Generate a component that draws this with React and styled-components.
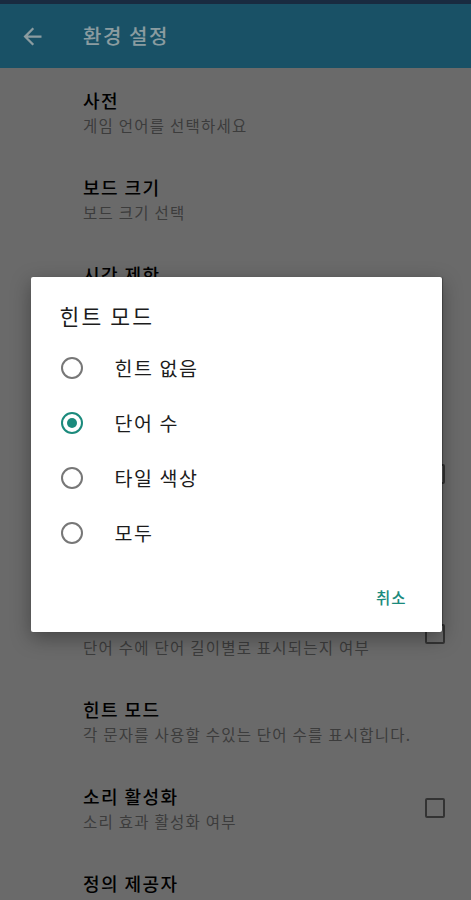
import React, { useState } from "react";
import styled, { createGlobalStyle } from "styled-components";

const GlobalStyle = createGlobalStyle`
  html, body {
    margin: 0;
    padding: 0;
    background: #999;
  }
  body {
    font-family: "Noto Sans CJK KR", "Noto Sans", Roboto, sans-serif;
    -webkit-font-smoothing: antialiased;
  }
  * {
    box-sizing: border-box;
  }
`;

const Screen = styled.div`
  position: relative;
  width: 471px;
  height: 900px;
  overflow: hidden;
  background: #999999;
`;

const StatusBar = styled.div`
  height: 4px;
  background: #243e5c;
`;

const Toolbar = styled.div`
  height: 64px;
  display: flex;
  align-items: center;
  background: #257593;
  color: #c8e0e6;
`;

const BackButton = styled.div`
  width: 27px;
  height: 27px;
  margin-left: 19px;
  margin-right: 37px;
  display: flex;
  align-items: center;
  justify-content: center;
`;

const ToolbarTitle = styled.div`
  font-size: 20px;
  font-weight: 500;
  line-height: 28px;
  letter-spacing: 0.08em;
`;

const List = styled.div`
  display: flex;
  flex-direction: column;
`;

const Item = styled.div`
  height: 87px;
  display: flex;
  align-items: center;
  padding: 20px 26px 19px 83px;
`;

const ItemText = styled.div`
  flex: 1;
  display: flex;
  flex-direction: column;
`;

const ItemTitle = styled.div`
  font-size: 18px;
  font-weight: 500;
  line-height: 24px;
  letter-spacing: 0.08em;
  color: #000;
`;

const ItemSummary = styled.div`
  margin-top: 2px;
  font-size: 15.5px;
  line-height: 22px;
  letter-spacing: 0.08em;
  color: #565656;
  white-space: nowrap;
`;

const CheckBox = styled.div`
  width: 20px;
  height: 20px;
  border: 2px solid #4a4a4a;
  border-radius: 2px;
  flex-shrink: 0;
  align-self: ${(p) => (p.$low ? "flex-end" : "center")};
`;

const Overlay = styled.div`
  position: absolute;
  inset: 0;
  padding-top: 9px;
  background: rgba(0, 0, 0, 0.3);
  display: flex;
  align-items: center;
  justify-content: center;
`;

const Dialog = styled.div`
  width: 411px;
  margin-left: 1px;
  background: #fff;
  border-radius: 2px;
  padding: 24px 0 17px;
  box-shadow: 0 6px 20px rgba(0, 0, 0, 0.35), 1px 0 1px rgba(0, 0, 0, 0.3);
  display: flex;
  flex-direction: column;
`;

const DialogTitle = styled.div`
  padding: 0 29px;
  font-size: 21.5px;
  line-height: 30px;
  letter-spacing: 0.1em;
  color: #1c1c1c;
  margin-bottom: 9.5px;
`;

const Option = styled.div`
  height: 55px;
  display: flex;
  align-items: center;
  padding-left: 30px;
  cursor: pointer;
`;

const Radio = styled.div`
  width: 22px;
  height: 22px;
  border-radius: 50%;
  border: 2px solid ${(p) => (p.$checked ? "#1b8a7c" : "#777")};
  display: flex;
  align-items: center;
  justify-content: center;
  margin-right: 32px;

  &::after {
    content: "";
    width: 10px;
    height: 10px;
    border-radius: 50%;
    background: ${(p) => (p.$checked ? "#1b8a7c" : "transparent")};
  }
`;

const OptionLabel = styled.div`
  font-size: 19.5px;
  line-height: 26px;
  letter-spacing: 0.08em;
  color: #1c1c1c;
`;

const Actions = styled.div`
  margin-top: 18.5px;
  display: flex;
  justify-content: flex-end;
  padding-right: 27px;
`;

const TextButton = styled.div`
  height: 36px;
  padding: 0 8px;
  display: flex;
  align-items: center;
  font-size: 15.5px;
  font-weight: 500;
  letter-spacing: 0.06em;
  color: #1b8a7c;
`;

const settings = [
  { title: "사전", summary: "게임 언어를 선택하세요" },
  { title: "보드 크기", summary: "보드 크기 선택" },
  { title: "시간 제한", summary: "게임 시간 제한 선택" },
  { title: "최소 단어 길이", summary: "찾을 단어의 최소 길이" },
  { title: "단어 표시", summary: "찾은 단어 목록 표시 여부", check: "low" },
  { title: "점수 방식", summary: "점수 계산 방식 선택" },
  { title: "길이별 단어 수", summary: "단어 수에 단어 길이별로 표시되는지 여부", check: "mid" },
  { title: "힌트 모드", summary: "각 문자를 사용할 수있는 단어 수를 표시합니다." },
  { title: "소리 활성화", summary: "소리 효과 활성화 여부", check: "mid" },
  { title: "정의 제공자", summary: "단어 정의를 가져올 사전" },
];

const hintModes = ["힌트 없음", "단어 수", "타일 색상", "모두"];

const BackArrow = () => (
  <svg width="27" height="27" viewBox="0 0 24 24" fill="currentColor">
    <path d="M20 11H7.83l5.59-5.59L12 4l-8 8 8 8 1.41-1.41L7.83 13H20v-2z" />
  </svg>
);

const App = () => {
  const [mode, setMode] = useState(1);

  return (
    <Screen>
      <GlobalStyle />
      <StatusBar />
      <Toolbar>
        <BackButton>
          <BackArrow />
        </BackButton>
        <ToolbarTitle>환경 설정</ToolbarTitle>
      </Toolbar>
      <List>
        {settings.map((item, i) => (
          <Item key={i}>
            <ItemText>
              <ItemTitle>{item.title}</ItemTitle>
              <ItemSummary>{item.summary}</ItemSummary>
            </ItemText>
            {item.check && <CheckBox $low={item.check === "low"} />}
          </Item>
        ))}
      </List>
      <Overlay>
        <Dialog>
          <DialogTitle>힌트 모드</DialogTitle>
          {hintModes.map((label, i) => (
            <Option key={label} onClick={() => setMode(i)}>
              <Radio $checked={mode === i} />
              <OptionLabel>{label}</OptionLabel>
            </Option>
          ))}
          <Actions>
            <TextButton>취소</TextButton>
          </Actions>
        </Dialog>
      </Overlay>
    </Screen>
  );
};

export default App;
